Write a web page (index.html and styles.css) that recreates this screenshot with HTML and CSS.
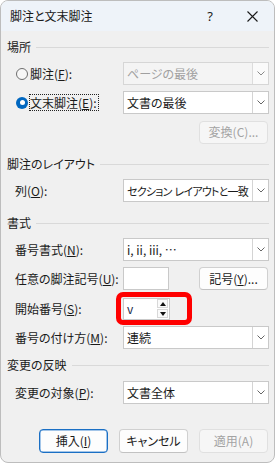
FILE: index.html
```html
<!DOCTYPE html>
<html lang="ja">
<head>
<meta charset="utf-8">
<title>脚注と文末脚注</title>
<link rel="stylesheet" href="styles.css">
</head>
<body>
<div class="window">
  <div class="titlebar">
    <span class="title">脚注と文末脚注</span>
    <span class="help">?</span>
    <span class="close"><svg width="11" height="11" viewBox="0 0 11 11"><path d="M0.5 0.5L10.5 10.5M10.5 0.5L0.5 10.5" stroke="#1a1a1a" stroke-width="1.1" fill="none"/></svg></span>
  </div>
  <div class="content">
    <div class="hdr hdr-place"><span>場所</span></div>
    <div class="row first">
      <div class="lbl radio-lbl"><span class="radio"></span><span class="rtext">脚注(<u>F</u>):</span></div>
      <div class="select disabled"><span class="val">ページの最後</span><span class="arrow"><svg width="8" height="5" viewBox="0 0 8 5"><path d="M0.5 0.5L4 4L7.5 0.5" stroke="#8a8a8a" fill="none"/></svg></span></div>
    </div>
    <div class="row">
      <div class="lbl radio-lbl"><span class="radio on"></span><span class="rtext focus">文末脚注(<u>E</u>):</span></div>
      <div class="select"><span class="val">文書の最後</span><span class="arrow"><svg width="8" height="5" viewBox="0 0 8 5"><path d="M0.5 0.5L4 4L7.5 0.5" stroke="#666" fill="none"/></svg></span></div>
    </div>
    <div class="row btnrow">
      <button class="btn disabled">変換(C)...</button>
    </div>

    <div class="hdr hdr-layout"><span>脚注のレイアウト</span></div>
    <div class="row first">
      <div class="lbl">列(<u>O</u>):</div>
      <div class="select"><span class="val tight">セクション レイアウトと一致</span><span class="arrow"><svg width="8" height="5" viewBox="0 0 8 5"><path d="M0.5 0.5L4 4L7.5 0.5" stroke="#666" fill="none"/></svg></span></div>
    </div>

    <div class="hdr hdr-format"><span>書式</span></div>
    <div class="row first">
      <div class="lbl">番号書式(<u>N</u>):</div>
      <div class="select"><span class="val">i, ii, iii, …</span><span class="arrow"><svg width="8" height="5" viewBox="0 0 8 5"><path d="M0.5 0.5L4 4L7.5 0.5" stroke="#666" fill="none"/></svg></span></div>
    </div>
    <div class="row">
      <div class="lbl">任意の脚注記号(<u>U</u>):</div>
      <div class="ctrl-split">
        <div class="textbox"></div>
        <button class="btn">記号(<u>Y</u>)...</button>
      </div>
    </div>
    <div class="row spinrow">
      <div class="lbl">開始番号(<u>S</u>):</div>
      <div class="ctrl-left">
        <div class="spin">
          <span class="spin-val">v</span>
          <span class="spin-btns">
            <span class="spin-btn"><span class="tri-up"></span></span>
            <span class="spin-btn"><span class="tri-down"></span></span>
          </span>
        </div>
      </div>
    </div>
    <div class="row">
      <div class="lbl">番号の付け方(<u>M</u>):</div>
      <div class="select"><span class="val">連続</span><span class="arrow"><svg width="8" height="5" viewBox="0 0 8 5"><path d="M0.5 0.5L4 4L7.5 0.5" stroke="#666" fill="none"/></svg></span></div>
    </div>

    <div class="hdr hdr-apply"><span>変更の反映</span></div>
    <div class="row first apply-row">
      <div class="lbl">変更の対象(<u>P</u>):</div>
      <div class="select"><span class="val">文書全体</span><span class="arrow"><svg width="8" height="5" viewBox="0 0 8 5"><path d="M0.5 0.5L4 4L7.5 0.5" stroke="#666" fill="none"/></svg></span></div>
    </div>

    <div class="footer">
      <button class="btn default">挿入(<u>I</u>)</button>
      <button class="btn">キャンセル</button>
      <button class="btn disabled">適用(A)</button>
    </div>
  </div>
  <div class="highlight"></div>
</div>
</body>
</html>
```

FILE: styles.css
```css
* { box-sizing: border-box; margin: 0; padding: 0; }
html, body { background: #ffffff; }
body {
  margin: 0;
  font-family: "Noto Sans CJK JP", "Noto Sans", sans-serif;
  font-size: 12px;
  line-height: 16px;
  color: #1a1a1a;
  font-feature-settings: "palt";
}
u { text-decoration: underline; text-underline-offset: 1px; }

.window {
  position: relative;
  width: 275px;
  height: 463px;
  border: 1px solid #bdbdbd;
  border-radius: 8px;
  background: #f0f0f0;
  overflow: hidden;
  display: flex;
  flex-direction: column;
}

.titlebar {
  height: 30px;
  background: #eef3f9;
  display: flex;
  align-items: center;
  padding-left: 9px;
}
.title { flex: 1; font-size: 12px; }
.help { width: 20px; text-align: center; font-size: 13px; font-family: "Noto Sans", sans-serif; }
.close { width: 24px; display: flex; justify-content: center; margin-left: 20px; margin-right: 10px; }

.content {
  flex: 1;
  display: flex;
  flex-direction: column;
  padding: 0 5px 0 6px;
}

.hdr {
  height: 16px;
  display: flex;
  align-items: center;
  gap: 5px;
}
.hdr::after {
  content: "";
  flex: 1;
  height: 1px;
  background: #d9d9d9;
}
.hdr-place { margin-top: 8px; }
.hdr-layout { margin-top: 12px; }
.hdr-format { margin-top: 13px; }
.hdr-apply { margin-top: 8px; }

.row {
  display: flex;
  align-items: center;
  height: 23px;
  margin-top: 6px;
}
.row.first { margin-top: 7px; }
.row.apply-row { margin-top: 8px; }
.row.spinrow { margin-top: 7px; }

.lbl {
  flex: none;
  width: 116px;
  padding-left: 8px;
  white-space: nowrap;
  display: flex;
  align-items: center;
}
.radio-lbl { padding-left: 9px; }
.radio {
  width: 12px;
  height: 12px;
  border-radius: 50%;
  border: 1px solid #6e6e6e;
  background: #f7f7f7;
  margin-right: 0;
  flex: none;
}
.radio.on {
  border: none;
  background: #0067c0;
  position: relative;
}
.radio.on::after {
  content: "";
  position: absolute;
  left: 3.5px;
  top: 3.5px;
  width: 5px;
  height: 5px;
  border-radius: 50%;
  background: #ffffff;
}
.rtext {
  margin-left: 1px;
  border: 1px solid transparent;
  padding: 0 1px 0 0;
  line-height: 15px;
}
.rtext.focus { border: 1px dotted #222; }

.select {
  flex: 1;
  min-width: 0;
  height: 23px;
  background: #ffffff;
  border: 1px solid #c9c9c9;
  display: flex;
  align-items: stretch;
}
.select .val {
  flex: 1;
  min-width: 0;
  padding-left: 3px;
  display: flex;
  align-items: center;
  white-space: pre;
  overflow: hidden;
}
.select .val.tight {
  font-size: 11px;
  letter-spacing: -0.75px;
  word-spacing: 1px;
}
.select .arrow {
  flex: none;
  width: 16px;
  border-left: 1px solid #d4d4d4;
  display: flex;
  align-items: center;
  justify-content: center;
  background: #ffffff;
}
.select.disabled { background: #f4f4f4; border-color: #d6d6d6; }
.select.disabled .val { color: #a0a0a0; }
.select.disabled .arrow { background: #fafafa; border-left-color: #dcdcdc; }

.btnrow { justify-content: flex-end; height: 24px; }

.btn {
  width: 69px;
  height: 23px;
  font: inherit;
  font-feature-settings: "palt";
  color: #1a1a1a;
  background: #fdfdfd;
  border: 1px solid #d0d0d0;
  border-bottom-color: #c2c2c2;
  border-radius: 4px;
  margin-right: 1px;
  display: flex;
  align-items: center;
  justify-content: center;
}
.btn.disabled {
  background: #f6f6f6;
  border-color: #e0e0e0;
  color: #a3a3a3;
}
.btn.default {
  border: 1px solid #1a6fc4;
  box-shadow: inset 0 0 0 0.5px #4a8ed4;
}

.ctrl-split {
  flex: 1;
  min-width: 0;
  display: flex;
  align-items: center;
  justify-content: space-between;
}
.textbox {
  width: 46px;
  height: 23px;
  background: #ffffff;
  border: 1px solid #c9c9c9;
}

.ctrl-left { flex: 1; display: flex; align-items: center; }
.spin {
  width: 47px;
  height: 22px;
  background: #ffffff;
  border: 1px solid #c9c9c9;
  display: flex;
  align-items: center;
  padding-left: 3px;
}
.spin-val { flex: 1; color: #1b2a4a; }
.spin-btns {
  display: flex;
  flex-direction: column;
  gap: 1px;
  margin-right: 1px;
}
.spin-btn {
  width: 11px;
  height: 9px;
  border: 1px solid #d8d8d8;
  background: #fafafa;
  display: flex;
  align-items: center;
  justify-content: center;
}
.tri-up {
  width: 0; height: 0;
  border-left: 3px solid transparent;
  border-right: 3px solid transparent;
  border-bottom: 4px solid #111;
}
.tri-down {
  width: 0; height: 0;
  border-left: 3px solid transparent;
  border-right: 3px solid transparent;
  border-top: 4px solid #111;
}

.footer {
  margin-top: 25px;
  height: 24px;
  display: flex;
  justify-content: flex-end;
  gap: 10px;
}
.footer .btn { height: 24px; }

.highlight {
  position: absolute;
  left: 115px;
  top: 291px;
  width: 76px;
  height: 33px;
  border: 5px solid #ff0000;
  border-radius: 7px;
  pointer-events: none;
}
```
